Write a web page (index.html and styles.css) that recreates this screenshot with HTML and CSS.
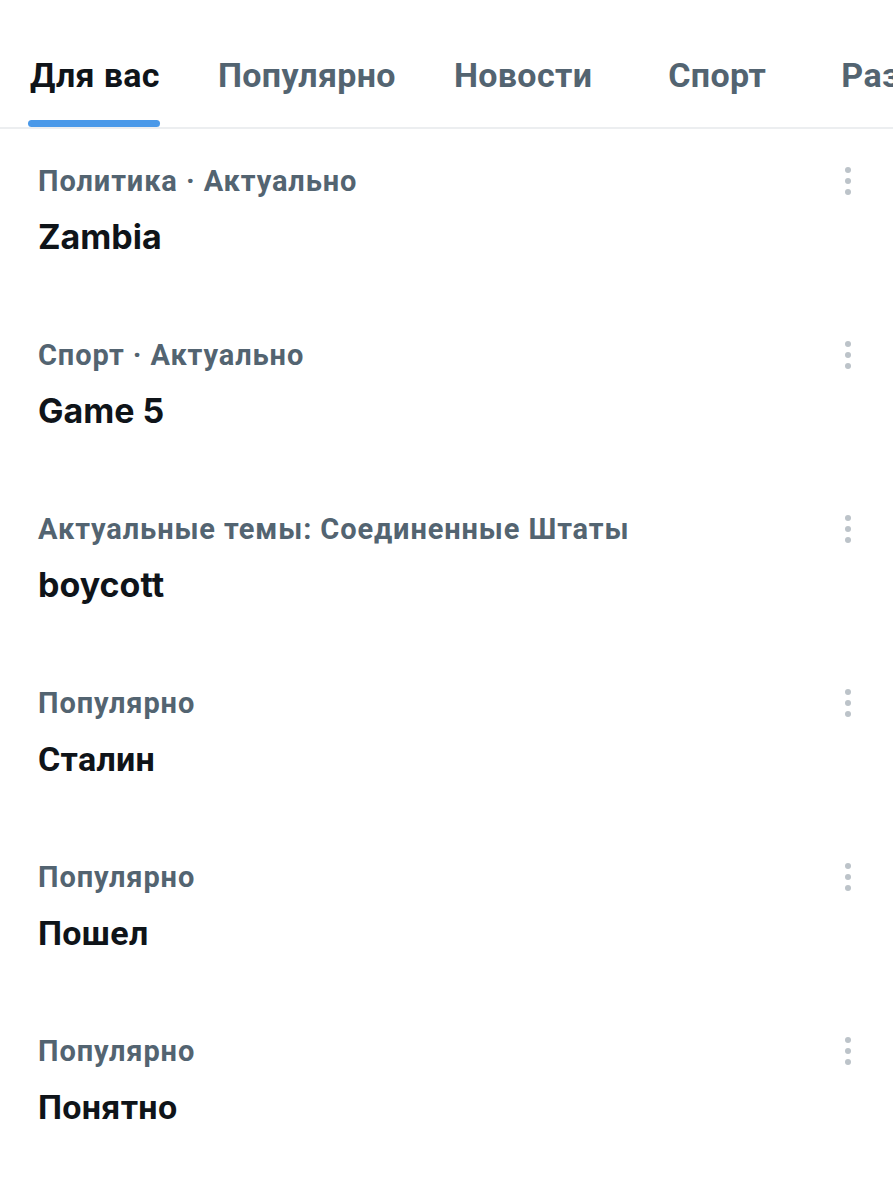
FILE: index.html
```html
<!DOCTYPE html>
<html lang="ru">
  <head>
    <meta charset="UTF-8" />
    <meta name="viewport" content="width=device-width, initial-scale=1.0" />
    <title>Актуальные темы</title>
    <link rel="stylesheet" href="styles.css">
  </head>
  <body>
    <nav class="tabs">
      <div class="tab active"><span class="tab-label">Для вас</span></div>
      <div class="tab"><span class="tab-label">Популярно</span></div>
      <div class="tab"><span class="tab-label">Новости</span></div>
      <div class="tab tab-wide"><span class="tab-label">Спорт</span></div>
      <div class="tab"><span class="tab-label">Развлечения</span></div>
    </nav>

    <div class="trends">
      <div class="trend">
        <div class="trend-top">
          <span class="trend-meta">Политика · Актуально</span>
          <svg class="more" viewBox="0 0 24 36"><circle cx="12" cy="7" r="3"/><circle cx="12" cy="18" r="3"/><circle cx="12" cy="29" r="3"/></svg>
        </div>
        <div class="trend-title latin">Zambia</div>
      </div>

      <div class="trend">
        <div class="trend-top">
          <span class="trend-meta">Спорт · Актуально</span>
          <svg class="more" viewBox="0 0 24 36"><circle cx="12" cy="7" r="3"/><circle cx="12" cy="18" r="3"/><circle cx="12" cy="29" r="3"/></svg>
        </div>
        <div class="trend-title latin">Game 5</div>
      </div>

      <div class="trend">
        <div class="trend-top">
          <span class="trend-meta">Актуальные темы: Соединенные Штаты</span>
          <svg class="more" viewBox="0 0 24 36"><circle cx="12" cy="7" r="3"/><circle cx="12" cy="18" r="3"/><circle cx="12" cy="29" r="3"/></svg>
        </div>
        <div class="trend-title latin">boycott</div>
      </div>

      <div class="trend">
        <div class="trend-top">
          <span class="trend-meta">Популярно</span>
          <svg class="more" viewBox="0 0 24 36"><circle cx="12" cy="7" r="3"/><circle cx="12" cy="18" r="3"/><circle cx="12" cy="29" r="3"/></svg>
        </div>
        <div class="trend-title">Сталин</div>
      </div>

      <div class="trend">
        <div class="trend-top">
          <span class="trend-meta">Популярно</span>
          <svg class="more" viewBox="0 0 24 36"><circle cx="12" cy="7" r="3"/><circle cx="12" cy="18" r="3"/><circle cx="12" cy="29" r="3"/></svg>
        </div>
        <div class="trend-title">Пошел</div>
      </div>

      <div class="trend">
        <div class="trend-top">
          <span class="trend-meta">Популярно</span>
          <svg class="more" viewBox="0 0 24 36"><circle cx="12" cy="7" r="3"/><circle cx="12" cy="18" r="3"/><circle cx="12" cy="29" r="3"/></svg>
        </div>
        <div class="trend-title">Понятно</div>
      </div>
    </div>
  </body>
</html>
```

FILE: styles.css
```css
body {
  margin: 0;
  background: #ffffff;
  font-family: Roboto, "Noto Sans", sans-serif;
  color: #0f1419;
  overflow: hidden;
}
.tabs {
  display: flex;
  height: 127px;
  border-bottom: 2px solid #eceef0;
  white-space: nowrap;
  overflow: hidden;
}
.tab {
  flex: none;
  position: relative;
  display: flex;
  align-items: center;
  justify-content: center;
  padding: 22px 29px 0;
  font-size: 34px;
  font-weight: 700;
  letter-spacing: 0.35px;
  color: #536471;
}
.tab:first-child {
  padding-left: 30px;
}
.tab-wide {
  padding: 22px 46px 0 47px;
}
.tab.active {
  color: #0f1419;
}
.tab.active .tab-label::after {
  content: "";
  position: absolute;
  left: 28px;
  right: 29px;
  bottom: 0;
  height: 7px;
  border-radius: 4px;
  background: #4a99e9;
}
.trend {
  height: 174px;
  box-sizing: border-box;
  padding: 34px 33px 0 38px;
}
.trend-top {
  display: flex;
  justify-content: space-between;
  align-items: center;
  height: 36px;
}
.trend-meta {
  font-size: 29px;
  font-weight: 700;
  letter-spacing: 0.9px;
  color: #536471;
}
.more {
  width: 24px;
  height: 36px;
  fill: #bcc3c9;
}
.trend-title {
  margin-top: 18px;
  line-height: 40px;
  font-size: 34px;
  font-weight: 700;
  letter-spacing: 0.3px;
}
.trend-title.latin {
  font-family: Inter, Roboto, sans-serif;
  font-weight: 700;
  letter-spacing: 0;
}
```
